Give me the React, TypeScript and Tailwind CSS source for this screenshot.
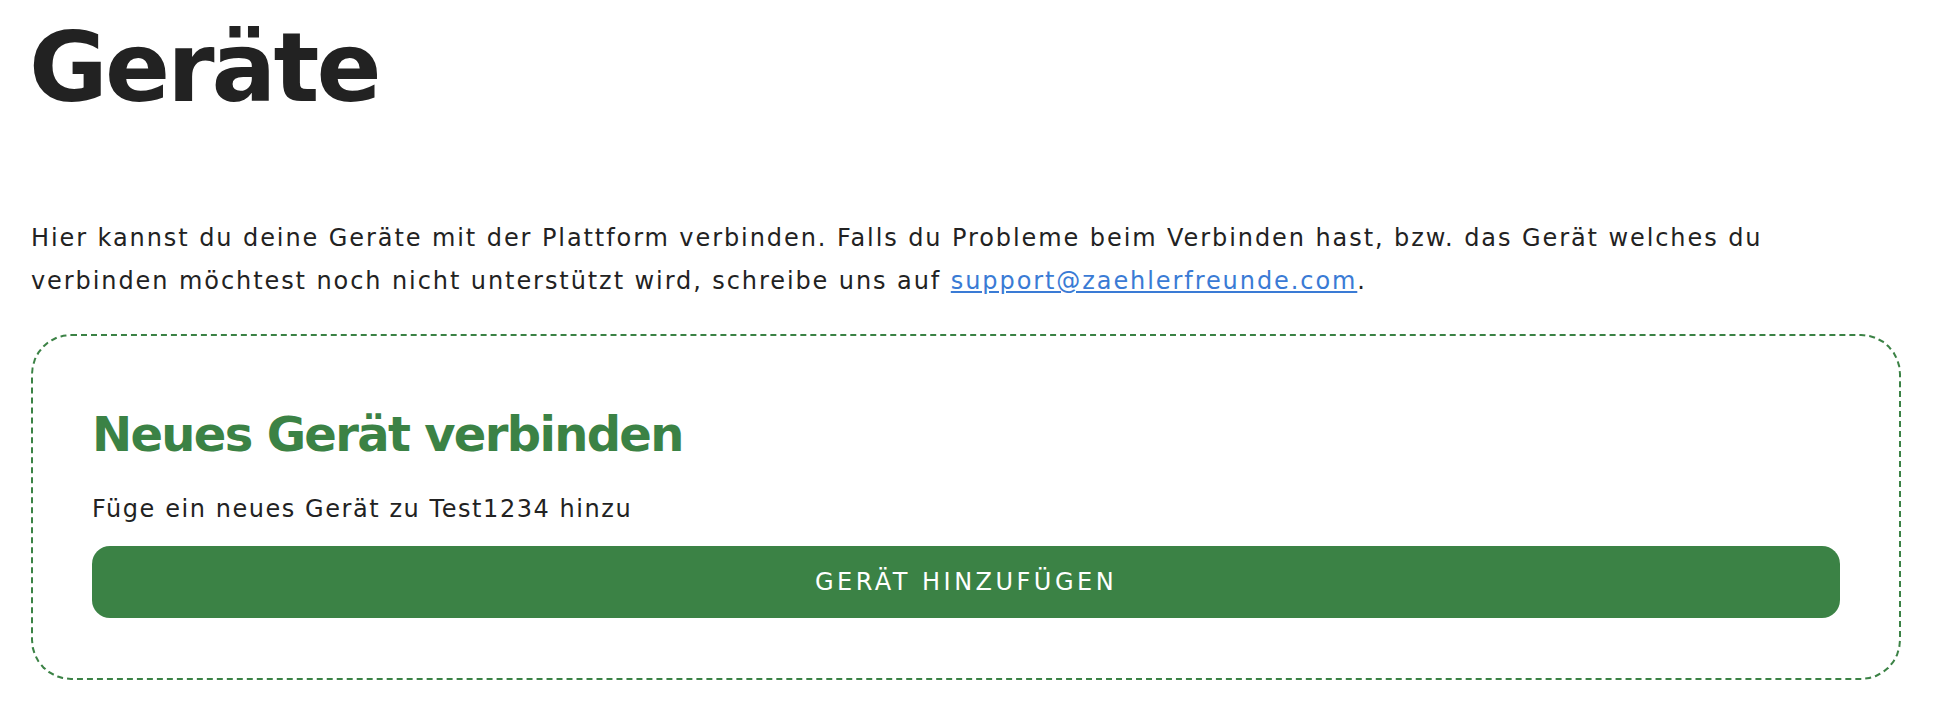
export default function App() {
  return (
    <div className="min-h-screen bg-white pl-[31px] pr-[37px] pt-5 font-['DejaVu_Sans','Noto_Sans',sans-serif] text-[#222222]">
      <h1 className="-ml-[2px] text-[96px] font-bold leading-none tracking-[-0.03em]">Geräte</h1>

      <p className="mt-[101px] text-[24px] leading-[1.8] tracking-[0.08em]">
        Hier kannst du deine Geräte mit der Plattform verbinden. Falls du Probleme beim Verbinden hast, bzw. das Gerät
        welches du
        <br />
        verbinden möchtest noch nicht unterstützt wird, schreibe uns auf{" "}
        <a href="#" className="text-[#3a7bd5] underline underline-offset-2">
          support@zaehlerfreunde.com
        </a>
        .
      </p>

      <div className="mt-[31px] rounded-[40px] border-2 border-dashed border-[#3b8245] px-[59px] pt-[70px] pb-[60px]">
        <h2 className="text-[48px] font-bold leading-[1.2] tracking-[-0.035em] text-[#3b8245]">Neues Gerät verbinden</h2>
        <p className="mt-6 text-[24px] leading-[1.8] tracking-[0.065em]">Füge ein neues Gerät zu Test1234 hinzu</p>
        <button className="mt-[15px] flex h-[72px] w-full items-center justify-center rounded-[18px] bg-[#3b8245] text-[24px] uppercase tracking-[0.145em] text-white">
          Gerät hinzufügen
        </button>
      </div>
    </div>
  );
}
